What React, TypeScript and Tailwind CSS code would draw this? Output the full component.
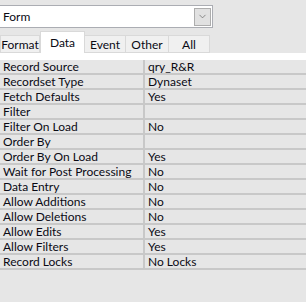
import { ChevronDown } from 'lucide-react'

const rows: [string, string][] = [
  ['Record Source', 'qry_R&R'],
  ['Recordset Type', 'Dynaset'],
  ['Fetch Defaults', 'Yes'],
  ['Filter', ''],
  ['Filter On Load', 'No'],
  ['Order By', ''],
  ['Order By On Load', 'Yes'],
  ['Wait for Post Processing', 'No'],
  ['Data Entry', 'No'],
  ['Allow Additions', 'No'],
  ['Allow Deletions', 'No'],
  ['Allow Edits', 'Yes'],
  ['Allow Filters', 'Yes'],
  ['Record Locks', 'No Locks'],
]

const tabs = [
  { label: 'Format', w: 'w-[40px]' },
  { label: 'Data', w: 'w-[45px]' },
  { label: 'Event', w: 'w-[41px]' },
  { label: 'Other', w: 'w-[43px]' },
  { label: 'All', w: 'w-[41px]' },
]

export default function App() {
  return (
    <div className="w-[306px] h-[302px] bg-[#e6e6e6] text-[12px] leading-[13px] text-[#0a0a14] font-['Lato',sans-serif] overflow-hidden">
      {/* object selector */}
      <div className="pt-[5px]">
        <div className="w-[213px] h-[23px] bg-white border border-l-0 border-[#abadb3] flex items-center justify-between">
          <span className="pl-[3px]">Form</span>
          <div className="mr-[1px] w-[17px] h-[18px] border border-[#adadad] bg-[#e1e1e1] flex items-center justify-center">
            <ChevronDown className="w-[11px] h-[11px] text-[#606060]" strokeWidth={1.5} />
          </div>
        </div>
      </div>

      {/* tabs */}
      <div className="mt-[3px] flex items-end h-[22px]">
        {tabs.map((t) =>
          t.label === 'Data' ? (
            <div key={t.label} className={`${t.w} h-[22px] bg-white border border-b-0 border-[#d9d9d9] flex items-start justify-center pt-[4px]`}>
              {t.label}
            </div>
          ) : (
            <div key={t.label} className={`${t.w} h-[18px] bg-[#f0f0f0] border border-[#d9d9d9] border-l-0 first:border-l flex items-center justify-center`}>
              {t.label}
            </div>
          )
        )}
      </div>

      {/* property sheet */}
      <div className="bg-white pt-[7px]">
        <div className="bg-[#e6e6e6]">
          {rows.map(([k, v]) => (
            <div key={k} className="flex h-[15px] border-b-2 border-[#c8c8c8]">
              <div className="w-[145px] border-r-2 border-[#c8c8c8] pl-[3px] flex items-center whitespace-nowrap">{k}</div>
              <div className="flex-1 pl-[3px] flex items-center whitespace-nowrap">{v}</div>
            </div>
          ))}
        </div>
      </div>
    </div>
  )
}
